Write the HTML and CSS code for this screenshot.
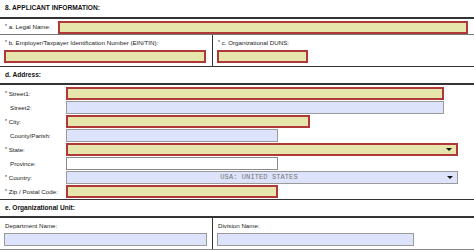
FILE: index.html
```html
<!DOCTYPE html>
<html>
<head>
<meta charset="utf-8">
<link rel="stylesheet" href="styles.css">
</head>
<body>
<div class="form">
  <div class="heading first">8. APPLICANT INFORMATION:</div>
  <div class="row-a">
    <span class="lbl w58"><span class="req">*</span> a. Legal Name:</span>
    <span class="inp req-inp grow"></span>
  </div>
  <div class="split rule-dark">
    <div class="cell cell-left">
      <span class="lbl"><span class="req">*</span> b. Employer/Taxpayer Identification Number (EIN/TIN):</span>
      <span class="inp req-inp w201"></span>
    </div>
    <div class="cell">
      <span class="lbl"><span class="req">*</span> c. Organizational DUNS:</span>
      <span class="inp req-inp w91"></span>
    </div>
  </div>
  <div class="heading">d. Address:</div>
  <div class="address rule-dark">
    <div class="arow"><span class="lbl w62"><span class="req">*</span> Street1:</span><span class="inp req-inp w378"></span></div>
    <div class="arow"><span class="lbl w62 pad">Street2:</span><span class="inp opt-inp w378"></span></div>
    <div class="arow"><span class="lbl w62"><span class="req">*</span> City:</span><span class="inp req-inp w244"></span></div>
    <div class="arow"><span class="lbl w62 pad">County/Parish:</span><span class="inp opt-inp w212"></span></div>
    <div class="arow"><span class="lbl w62"><span class="req">*</span> State:</span><span class="inp req-inp w392 sel"><span class="arrow"></span></span></div>
    <div class="arow"><span class="lbl w62 pad">Province:</span><span class="inp plain-inp w212"></span></div>
    <div class="arow"><span class="lbl w62"><span class="req">*</span> Country:</span><span class="inp opt-inp w392 sel"><span class="country">USA: UNITED STATES</span><span class="arrow"></span></span></div>
    <div class="arow"><span class="lbl w62"><span class="req">*</span> Zip / Postal Code:</span><span class="inp req-inp w212"></span></div>
  </div>
  <div class="heading">e. Organizational Unit:</div>
  <div class="split rule-bottom-gray">
    <div class="cell cell-left">
      <span class="lbl">Department Name:</span>
      <span class="inp opt-inp w202"></span>
    </div>
    <div class="cell">
      <span class="lbl">Division Name:</span>
      <span class="inp opt-inp w197"></span>
    </div>
  </div>
</div>
</body>
</html>
```
FILE: styles.css
```css
* { box-sizing: border-box; }
html, body { margin: 0; padding: 0; background: #fff; }
body {
  font-family: "Liberation Sans", Arial, sans-serif;
  color: #222;
  width: 474px;
  height: 250px;
  overflow: hidden;
}
.form { display: flex; flex-direction: column; }
.heading {
  height: 18px;
  padding: 4px 0 0 5px;
  font-size: 6.6px;
  font-weight: bold;
  color: #111;
  border-bottom: 2px solid #333;
}
.heading.first { height: 19px; padding-top: 4px; }
.lbl {
  font-size: 6.2px;
  color: #222;
  white-space: nowrap;
  flex: none;
}
.req { font-size: 5px; position: relative; top: -1px; }
.w58 { width: 54px; }
.w62 { width: 62px; }
.inp { display: block; height: 13px; flex: none; position: relative; }
.grow { flex: 1 1 auto; }
.req-inp { background: #e6e6ac; border: 2px solid #b03838; }
.opt-inp { background: #dde3fb; border: 1px solid #9a9a9a; }
.plain-inp { background: #fff; border: 1px solid #8a8a8a; }
.row-a {
  display: flex;
  align-items: center;
  height: 16px;
  padding: 2px 6px 0 4px;
  border-bottom: 1px solid #777;
}
.row-a .lbl { padding-left: 1px; margin-top: -3px; }
.split {
  display: flex;
  height: 32px;
}
.rule-dark { border-bottom: 1px solid #333; }
.rule-bottom-gray { border-bottom: 1px solid #888; }
.cell {
  display: flex;
  flex-direction: column;
  justify-content: space-between;
  padding: 4px 4px 3px 4px;
}
.cell .lbl { padding-left: 1px; }
.cell-left { width: 213px; border-right: 1px solid #333; }
.w201 { width: 202px; }
.w91 { width: 91px; }
.w202 { width: 203px; }
.w197 { width: 197px; }
.address {
  display: flex;
  flex-direction: column;
  padding: 1px 0 1px 4px;
  height: 115px;
}
.arow {
  display: flex;
  align-items: center;
  height: 14px;
}
.arow .lbl { padding-left: 1px; }
.arow .lbl.pad { padding-left: 6px; }
.w378 { width: 378px; }
.w244 { width: 244px; }
.w212 { width: 212px; }
.w392 { width: 392px; }
.sel { display: flex; align-items: center; justify-content: center; }
.arrow {
  position: absolute;
  right: 4px;
  top: 50%;
  margin-top: -1px;
  width: 0; height: 0;
  border-left: 3px solid transparent;
  border-right: 3px solid transparent;
  border-top: 3px solid #111;
}
.country {
  font-family: "Liberation Mono", "Courier New", monospace;
  font-size: 7px;
  color: #777;
  letter-spacing: 0.1px;
  padding-right: 6px;
}
```
